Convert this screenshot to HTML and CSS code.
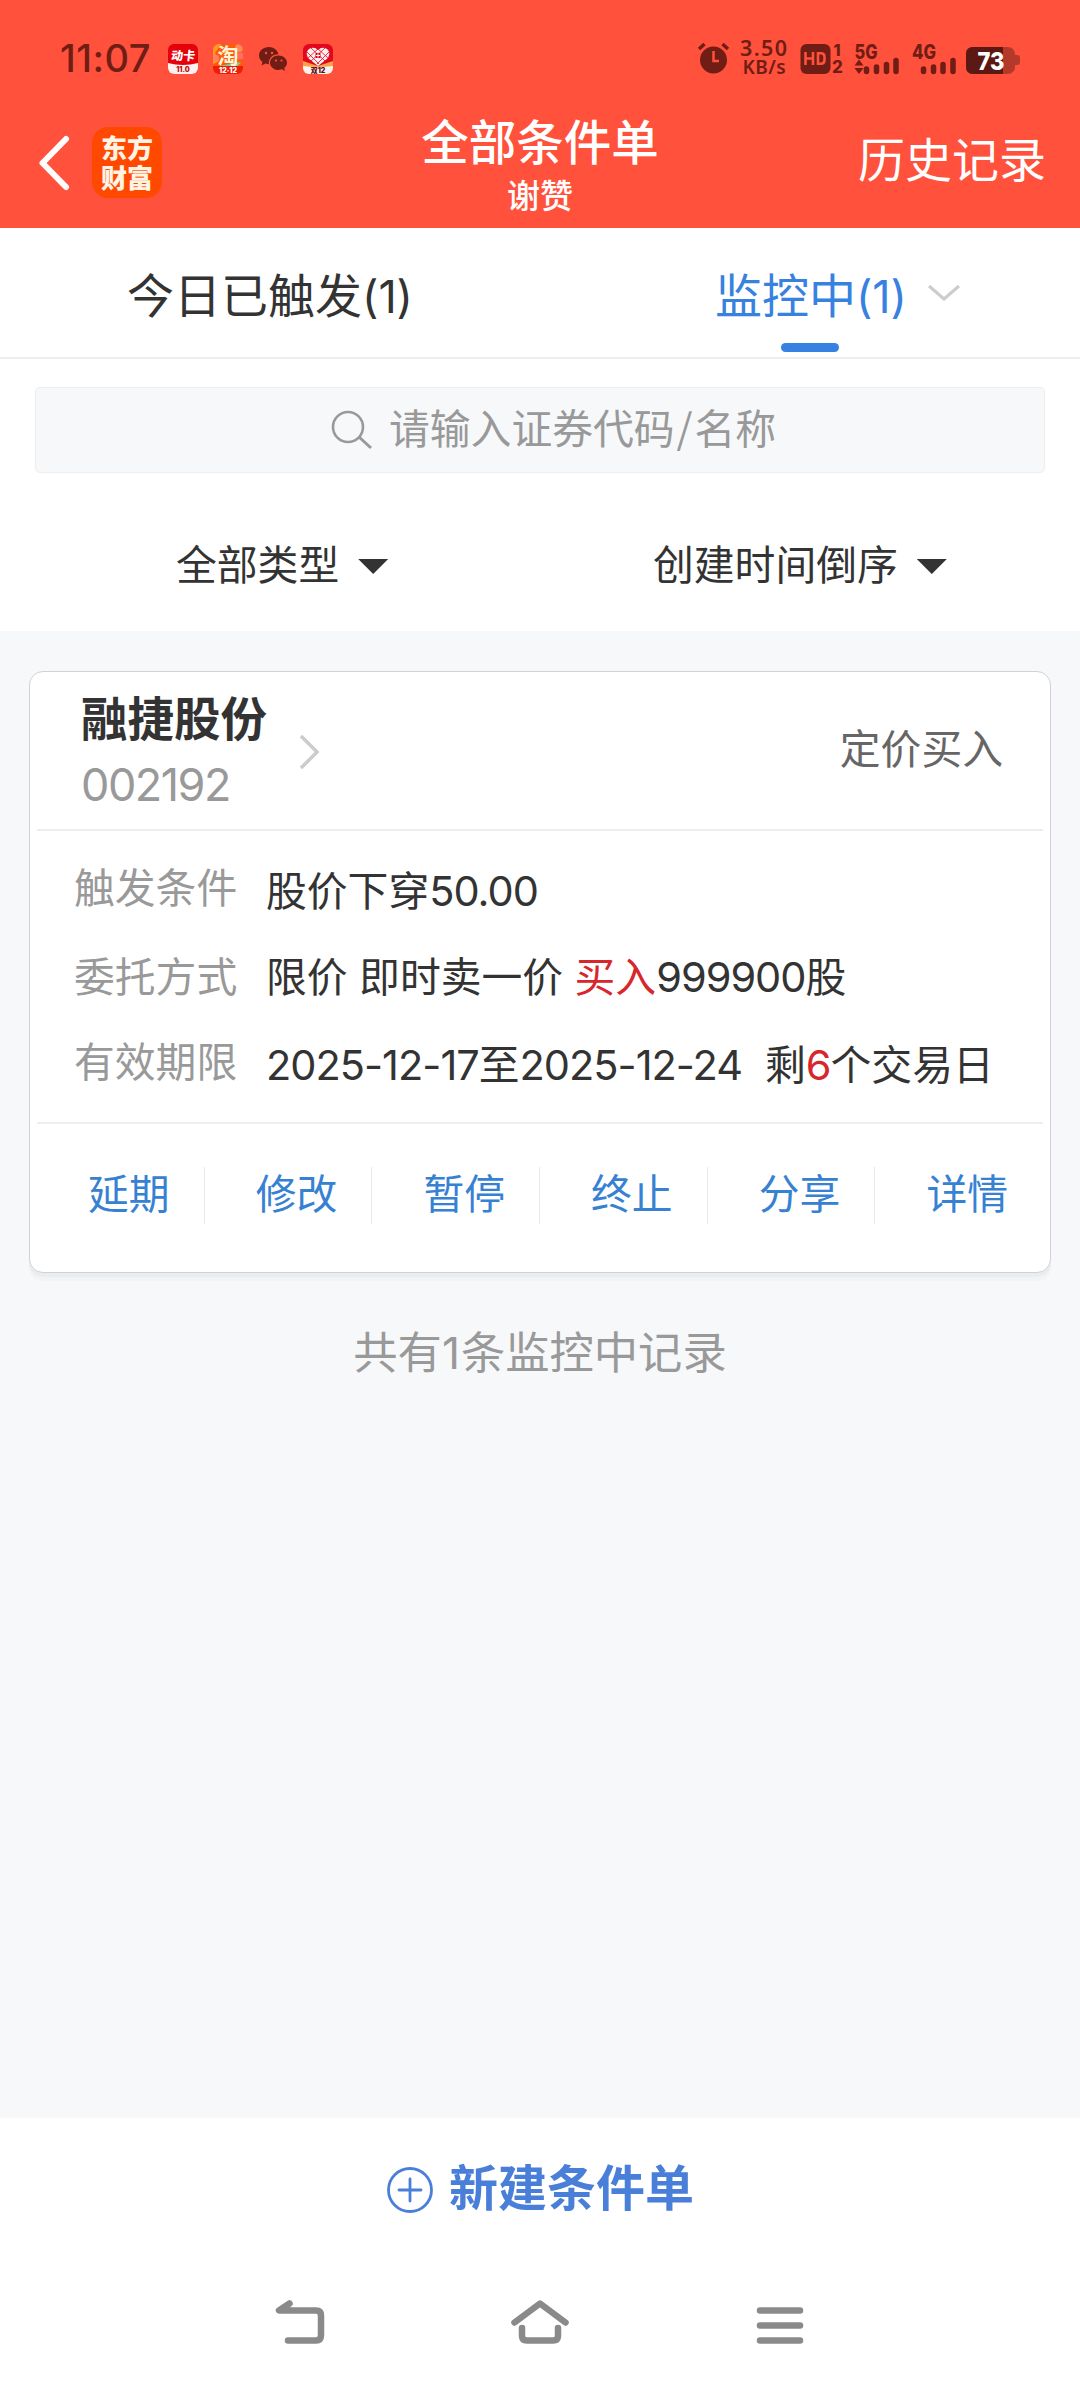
FILE: index.html
```html
<!DOCTYPE html>
<html lang="zh-CN">
<head>
<meta charset="utf-8">
<title>全部条件单</title>
<link rel="stylesheet" href="styles.css">
</head>
<body>
<header class="header">
  <div class="status">
    <span class="clock">11:07</span>
    <svg class="notices" width="165" height="30" viewBox="0 0 165 30">
      <defs><clipPath id="tile"><rect width="30" height="30" rx="6"/></clipPath></defs>
      <g clip-path="url(#tile)">
        <rect width="30" height="30" fill="#e60009"/>
        <path d="M0 19Q15 23 30 19V30H0Z" fill="#fff1f0"/>
        <text x="15" y="16" class="t-tile" font-size="12" fill="#fff" transform="skewX(-6) translate(1.500 0)">动卡</text>
        <text x="15" y="28" class="t-tile" font-size="7" fill="#c01018">11.0</text>
      </g>
      <g transform="translate(45)" clip-path="url(#tile)">
        <rect width="30" height="30" fill="#ff5a0a"/>
        <rect y="22" width="30" height="8" fill="#f01c05"/>
        <path d="M0 0H8L2 9L6 17L0 20Z" fill="#ff9a1c"/>
        <circle cx="26" cy="4" r="4" fill="#ff8a60"/><circle cx="27" cy="12" r="3.500" fill="#ff7068"/><circle cx="3" cy="14" r="3" fill="#ff806a"/>
        <path d="M7 22Q18 19 28 18L25 22Z" fill="#8ac49a"/>
        <text x="15" y="19" class="t-tao" font-size="21" fill="#fff6d8">淘</text>
        <text x="15" y="29" class="t-tile" font-size="7" fill="#fff">12·12</text>
      </g>
      <g fill="#701d15">
        <path d="M101 3C95 3 91 7 91 11.500C91 14.200 92.500 16.500 94.500 18L93.500 21.500L97.500 19.500L101 20.200C100 14 105 10 110.500 10.200C109.500 6 105.500 3 101 3Z"/>
        <path d="M110.500 11.500C105.500 11.500 102 15 102 18.700C102 22.600 105.800 26 110.500 26L114 25.300L117 27L116.200 24C118 22.600 119 20.700 119 18.700C119 15 115.500 11.500 110.500 11.500Z"/>
        <g fill="#ff513b"><circle cx="98" cy="9" r="1.200"/><circle cx="104" cy="9" r="1.200"/><circle cx="108" cy="16.500" r="1.100"/><circle cx="113.500" cy="16.500" r="1.100"/></g>
      </g>
      <g transform="translate(135)" clip-path="url(#tile)">
        <rect width="30" height="30" fill="#e3061d"/>
        <path d="M0 17L15 22L30 17V30H0Z" fill="#f8a348"/>
        <path d="M15 22L5 14Q2 8 6 5Q11 2 15 6Q19 2 24 5Q28 8 25 14Z" fill="#fff0ee"/>
        <path d="M4 8L16 20M8 4L22 17M14 4L25 14M26 8L14 20M22 4L8 17M16 4L5 14" fill="none" stroke="#e3061d" stroke-width="0.8"/>
        <rect x="12.500" y="9" width="5" height="5" fill="#e3061d"/><path d="M13 11.500H17M15 9.500V13.500" stroke="#fff"/>
        <path d="M0 22Q15 24 30 22V30H0Z" fill="#fff1ef"/>
        <text x="15" y="29" class="t-tile" font-size="7" fill="#5c1015">双12</text>
      </g>
    </svg>
    <svg class="signals" width="322" height="38" viewBox="0 0 322 38">
      <g fill="#701d15">
        <circle cx="15.500" cy="22" r="13.500"/>
        <path d="M1 11L6.500 6M24.500 6L30 11" stroke="#701d15" stroke-width="3.500"/>
        <path d="M15.500 13V23H21" fill="none" stroke="#ff513b" stroke-width="2.500"/>
        <text x="65.500" y="18" class="t-rate" font-size="21.500" textLength="47">3.50</text>
        <text x="66" y="36" class="t-rate" font-size="19" textLength="43">KB/s</text>
        <rect x="102.500" y="6" width="30" height="30" rx="6"/>
        <path d="M107.500 14V27M115 14V27M107.500 20.500H115M120 15.300H123Q126.500 15.300 126.500 19V22Q126.500 25.700 123 25.700H120Z" fill="none" stroke="#ff513b" stroke-width="2.600"/>
        <text x="139" y="18" class="t-sim" font-size="16">1</text>
        <text x="139.500" y="35" class="t-sim" font-size="17">2</text>
        <text x="168" y="20.500" class="t-sim" font-size="19.500" textLength="23" lengthAdjust="spacingAndGlyphs">5G</text>
        <path d="M156.500 27.500L161 21.500L165.500 27.500ZM156.500 30L161 36L165.500 30Z"/>
        <path d="M168.500 31V33.500M178.500 29V33.500M188.500 26.500V33.500M198 22.500V33.500M225.500 31V33.500M235.500 29V33.500M245 26.500V33.500M255 22.500V33.500" stroke="#701d15" stroke-width="5.500" stroke-linecap="round"/>
        <text x="226" y="20.500" class="t-sim" font-size="19.500" textLength="24" lengthAdjust="spacingAndGlyphs">4G</text>
      </g>
      <rect x="268" y="9" width="49" height="27" rx="7" fill="#b33a2b"/>
      <path d="M317 17H319Q322 17 322 20V24Q322 27 319 27H317Z" fill="#b33a2b"/>
      <path d="M275 9H305V36H275Q268 36 268 29V16Q268 9 275 9Z" fill="#5c1812"/>
      <text x="293" y="31.500" class="t-batt" font-size="25" fill="#fff" textLength="27" lengthAdjust="spacingAndGlyphs">73</text>
    </svg>
  </div>
  <div class="navbar">
    <div class="nav-left">
      <svg width="32" height="56" viewBox="0 0 32 56"><path d="M28 4L4.500 28L28 52" fill="none" stroke="#fff" stroke-width="6" stroke-linecap="round" stroke-linejoin="round"/></svg>
      <div class="brand"><span>东方</span><span>财富</span></div>
    </div>
    <div class="titles"><h1>全部条件单</h1><p>谢赞</p></div>
    <a class="history">历史记录</a>
  </div>
</header>

<nav class="tabs">
  <div class="tab">今日已触发<span class="num">(1)</span></div>
  <div class="tab tab-active">
    <span class="tab-label">监控中<span class="num">(1)</span></span>
    <svg width="34" height="18" viewBox="0 0 34 18"><path d="M2 2L17 15L32 2" fill="none" stroke="#ccc" stroke-width="3"/></svg>
  </div>
</nav>

<section class="tools">
  <div class="search">
    <svg width="42" height="40" viewBox="0 0 42 40"><circle cx="17" cy="17" r="15" fill="none" stroke="#999" stroke-width="2.600"/><path d="M28 27L40 38" stroke="#999" stroke-width="3"/></svg>
    <span>请输入证券代码<span class="slash">/</span>名称</span>
  </div>
  <div class="filters">
    <div class="filter">全部类型<i class="caret"></i></div>
    <div class="filter">创建时间倒序<i class="caret"></i></div>
  </div>
</section>

<main class="list">
  <article class="card">
    <div class="card-head">
      <div><h2>融捷股份</h2><p class="code">002192</p></div>
      <svg class="more" width="22" height="38" viewBox="0 0 22 38"><path d="M3 3L19 19L3 35" fill="none" stroke="#ccc" stroke-width="3.500"/></svg>
      <span class="kind">定价买入</span>
    </div>
    <dl class="terms">
      <div class="term"><dt>触发条件</dt><dd class="low">股价下穿<span class="n">50.00</span></dd></div>
      <div class="term"><dt>委托方式</dt><dd>限价<i class="sp"></i>即时卖一价<i class="sp"></i><em>买入</em><span class="n">999900</span>股</dd></div>
      <div class="term"><dt>有效期限</dt><dd class="low"><span class="n">2025-12-17</span>至<span class="n">2025-12-24</span><span class="left">剩<em class="n">6</em>个交易日</span></dd></div>
    </dl>
    <div class="actions"><a>延期</a><a>修改</a><a>暂停</a><a>终止</a><a>分享</a><a>详情</a></div>
  </article>
  <p class="total">共有<span class="one">1</span>条监控中记录</p>
</main>

<footer class="footer">
  <a class="create">
    <svg width="48" height="48" viewBox="0 0 48 48" fill="none" stroke="#4a7fd9" stroke-width="2.800" stroke-linecap="round"><circle cx="24" cy="24" r="21.500"/><path d="M24 13V35M13 24H35"/></svg>
    <span>新建条件单</span>
  </a>
  <div class="sysnav">
    <svg width="60" height="48" viewBox="0 0 60 48"><path d="M19.500 6.500L9 13.500H46Q51 13.500 51 18.500V38Q51 43.500 46 43.500H18" /></svg>
    <svg width="60" height="48" viewBox="0 0 60 48"><path d="M4.500 25.500L30 6.500L55.500 25.500M12 31V39Q12 43.500 17 43.500H43Q48 43.500 48 39V31"/></svg>
    <svg width="60" height="48" viewBox="0 0 60 48"><path d="M10 13.500H50M10 28.500H50M10 43.500H50"/></svg>
  </div>
</footer>
</body>
</html>
```
FILE: styles.css
```css
* { box-sizing: border-box; margin: 0; padding: 0; }
body {
  width: 1080px; height: 2388px; display: flex; flex-direction: column;
  background: #f7f8fa; color: #333; overflow: hidden;
  font-family: "Noto Sans CJK SC", sans-serif; font-size: 40.8px; line-height: 1;
}
svg { display: block; flex: none; overflow: visible; }
h1, h2, em, i { font-style: normal; }
text { text-anchor: middle; font-family: Inter, "Noto Sans CJK SC", sans-serif; }
.t-tile { font-weight: 900; }
.t-tao { font-weight: 700; }
.t-rate { font-family: "Noto Sans", sans-serif; font-weight: 600; }
.t-sim, .t-batt { font-weight: 800; }

.header { height: 228px; background: #ff513b; color: #fff; }
.status { display: flex; height: 96px; padding: 38px 58px 0 60px; }
.clock { width: 108px; padding-top: 1px; color: #701d15; font: 500 38px/38px Inter, sans-serif; letter-spacing: .5px; }
.notices { margin-top: 6px; }
.signals { margin-left: 365px; }
.navbar { display: grid; grid-template-columns: 1fr 320px 1fr; height: 132px; }
.nav-left { display: flex; align-items: flex-start; gap: 14px; padding: 39px 0 0 38px; }
.brand {
  display: flex; flex-direction: column; align-items: center;
  width: 70px; height: 71px; margin: -8px 0 0 8px; padding-top: 5px; border-radius: 16px;
  background: #ff4800; color: #fff4e4; font-size: 26px; font-weight: 900; line-height: 30px;
}
.titles { text-align: center; }
.titles h1 { margin-top: 20px; font-size: 47.5px; font-weight: 500; line-height: 48px; }
.titles p { margin-top: 13px; font-size: 33px; font-weight: 500; line-height: 34px; }
.history { padding: 37px 34px 0 0; text-align: right; font-size: 47px; line-height: 48px; }

.tabs { display: flex; height: 131px; background: #fff; border-bottom: 2px solid #eee; font-size: 47px; line-height: 48px; }
.tab { width: 540px; padding-top: 41px; text-align: center; }
.tab-active { display: flex; gap: 20px; padding-left: 175px; color: #3781e0; }
.tab-active svg { margin-top: 15px; }
.tab-label { position: relative; }
.tab-label::after {
  content: ""; position: absolute; left: 66px; top: 74px; width: 58px; height: 9px; border-radius: 4.500px; background: #3781e0;
}
.num { font-family: Inter, sans-serif; font-size: 45px; letter-spacing: -.1px; }

.tools { height: 272px; padding: 28px 35px 0; background: #fff; }
.search {
  display: flex; align-items: center; gap: 16px; height: 86px; padding-left: 295px;
  border: 1.500px solid #eee; border-radius: 5px; background: #f7f8fa; color: #999;
}
.search > span { padding-bottom: 5px; }
.slash { padding: 0 2px; }
.filters { display: flex; height: 158px; padding: 68px 0 0 141px; line-height: 44px; }
.filter { display: flex; flex: none; gap: 19px; }
.filter:first-child { width: 477px; }
.caret { width: 30px; height: 15px; margin-top: 18px; background: #333; clip-path: polygon(0 0, 100% 0, 50% 100%); }

.list { flex: 1; padding: 40px 29px 0; }
.card {
  height: 602px; padding: 0 7px; border: 1.500px solid #d0d2d6; border-radius: 14px; background: #fff;
  box-shadow: 0 4px 0 #ebecee, 0 8px 0 #f2f3f5;
}
.card-head { display: flex; height: 159px; padding: 0 40px 0 44px; border-bottom: 2px solid #eee; }
.card-head h2 { margin-top: 20px; font-size: 46.500px; font-weight: 700; line-height: 48px; }
.code { margin-top: 21px; color: #999; font: 45px/48px Inter, sans-serif; letter-spacing: -1.500px; }
.more { margin: 61px 0 0 31px; }
.kind { margin: 53px 0 0 auto; color: #666; line-height: 44px; }
.terms { height: 293px; padding: 33px 0 0 37px; border-bottom: 2px solid #eee; line-height: 44px; }
.term { display: flex; height: 84.500px; white-space: nowrap; }
.term:first-child { height: 89px; }
dt { width: 192px; color: #999; }
.low { padding-top: 3px; }
em { color: #d7262c; }
.n { font-family: Inter, sans-serif; font-size: 41.500px; letter-spacing: -1px; }
.sp { display: inline-block; width: 11.500px; }
.left { margin-left: 23px; }
.actions { display: flex; padding-top: 43px; }
.actions a { width: 167.700px; height: 57px; padding-left: 51px; border-right: 1px solid #e8e8e8; color: #3781d2; line-height: 49px; white-space: nowrap; }
.actions a:last-child { width: auto; border: 0; }
.total { margin-top: 53px; color: #999; font-size: 44.300px; line-height: 48px; text-align: center; }
.one { padding-right: 1px; font-family: Inter, sans-serif; }

.footer { height: 270px; background: #fff; }
.create { display: flex; justify-content: center; gap: 15px; height: 174px; padding: 42px 0 0 0; color: #4a7fd9; font-size: 49px; font-weight: 700; line-height: 50px; }
.create svg { margin-top: 6px; }
.sysnav { display: flex; justify-content: space-between; padding: 5px 270px 0; }
.sysnav path { fill: none; stroke: #8a8a8a; stroke-width: 6.500; stroke-linecap: round; stroke-linejoin: round; }
```
